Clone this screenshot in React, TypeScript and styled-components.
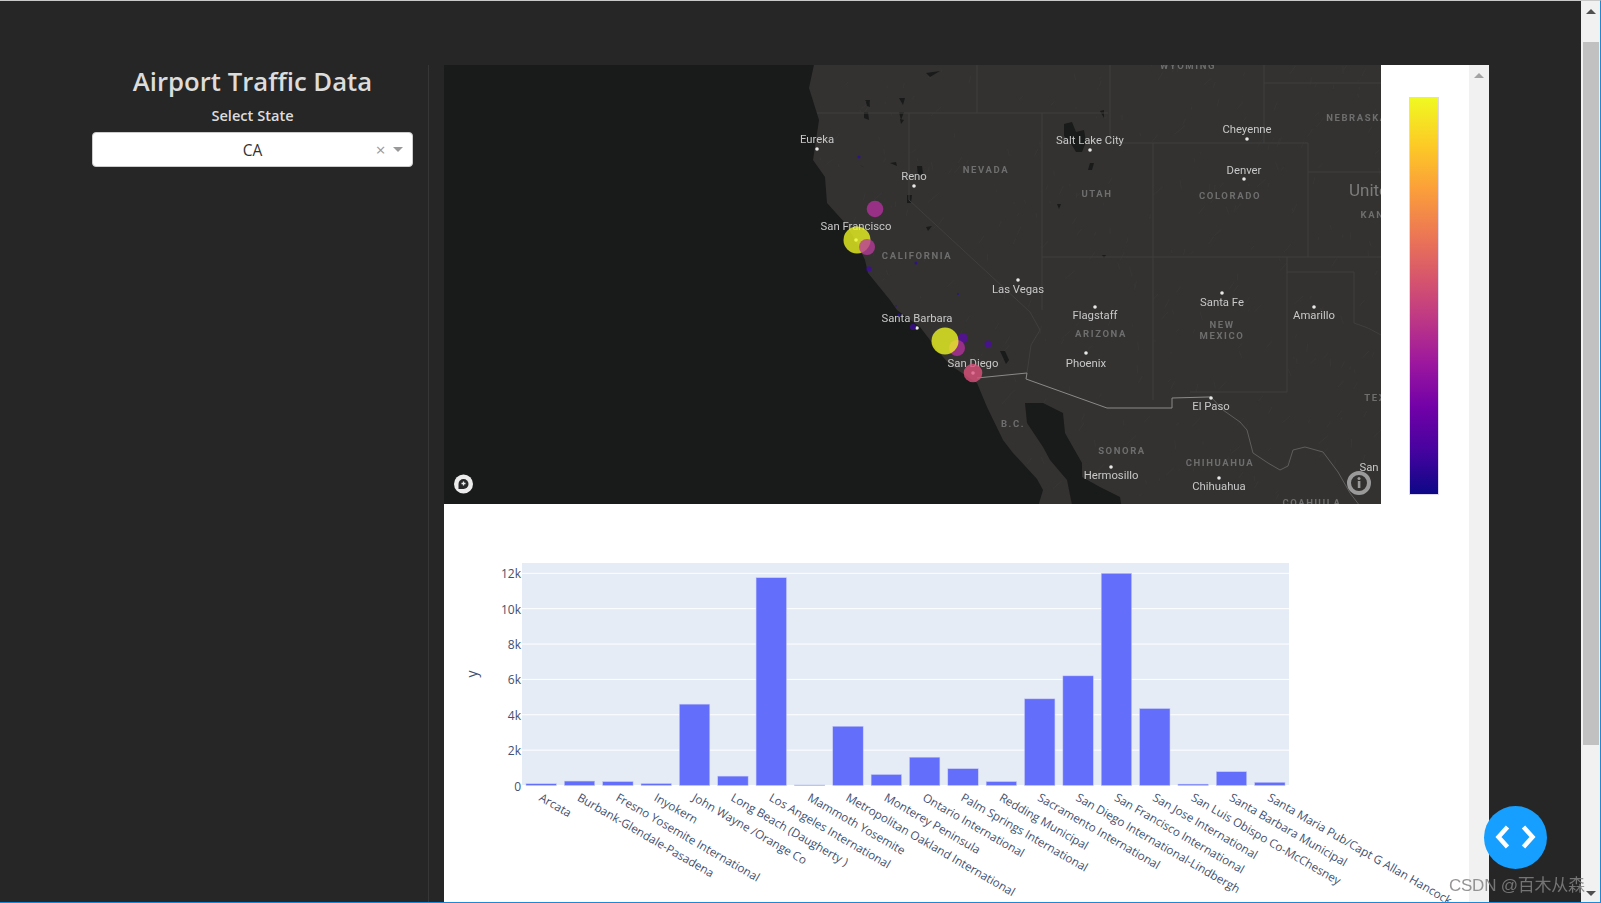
import React from 'react';
import styled, { createGlobalStyle } from 'styled-components';

const PAGE_FONT = '"Open Sans", "Noto Sans", sans-serif';
const MAP_FONT = 'Roboto, "Liberation Sans", sans-serif';

const GlobalStyle = createGlobalStyle`
  html, body {
    margin: 0;
    padding: 0;
    height: 903px;
    overflow: hidden;
    background: #262626;
    font-family: ${PAGE_FONT};
  }
`;

// map data, in page pixels; the svg viewBox starts at the map's corner
const MAP_X = 444;
const MAP_Y = 65;
const MAP_W = 937;
const MAP_H = 439;

const COAST =
  'M815 60 L809 88 L819 120 L813 160 L825 177 L827 203 L845 223 L857 243 L865 260 L868 273 L890 300 L897 310 L920 327 L930 340 L937 350 L950 365 L977 383 L987 407 L1003 440 L1013 453 L1037 479 L1043 490 L1037 510 L1400 510 L1400 60 Z';
const GULF =
  'M1025 403 L1043 403 L1063 413 L1065 433 L1082 463 L1082 477 L1100 487 L1120 497 L1122 510 L1073 510 L1067 480 L1050 460 L1043 447 L1027 423 Z';

const STATE_LINES = [
  'M817 113 L1108 113',
  'M977 60 L977 113',
  'M909 113 L909 200 L1030 312 L1040 330 L1031 345 L1027 373',
  'M1042 113 L1042 310',
  'M1042 257 L1400 257',
  'M1110 60 L1110 143 L1308 143 L1308 257',
  'M1153 143 L1153 400',
  'M1264 60 L1264 143',
  'M1264 83 L1400 83',
  'M1308 172 L1400 172',
  'M1287 257 L1287 392 L1190 392',
  'M1287 272 L1354 272 L1354 323 L1368 328 L1381 335',
];
const BORDER_LINE = 'M977 378 L1027 373 L1026 379 L1107 408 L1172 408 L1172 398 L1208 397 L1211 397';
const RIVER_LINE =
  'M1211 397 L1223 410 L1240 422 L1247 430 L1253 453 L1268 463 L1280 470 L1288 466 L1293 450 L1305 447 L1323 452 L1338 472 L1350 493 L1363 510';

const LAKES = [
  'M1064 124 L1072 122 L1076 132 L1084 130 L1086 142 L1082 152 L1076 152 L1070 142 L1064 136 Z',
  'M1090 163 L1094 163 L1092 170 L1088 170 Z',
  'M917 166 L922 166 L923 174 L918 176 Z',
  'M907 195 L912 195 L911 203 L907 203 Z',
  'M926 73 L940 71 L930 77 Z',
  'M866 102 L869 100 L870 107 L867 106 Z',
  'M899 98 L905 98 L903 105 Z',
  'M865 100 L870 100 L869 105 Z',
  'M864 112 L868 112 L869 120 L864 118 Z',
  'M899 112 L904 112 L901 120 Z',
  'M900 119 L904 120 L901 124 Z',
  'M1000 351 L1005 351 L1009 360 L1006 364 Z',
  'M1100 111 L1104 110 L1104 118 Z',
  'M1057 204 L1061 204 L1059 209 Z',
  'M890 163 L896 162 L897 166 Z',
  'M860 165 L865 168 L862 166 Z',
  'M926 227 L932 226 L928 231 Z',
  'M1102 255 L1106 255 L1104 258 Z',
];

const CITIES: [string, number, number, number, number][] = [
  ['Eureka', 817, 143, 817, 149],
  ['Reno', 914, 180, 914, 186],
  ['San Francisco', 856, 230, 856, 240],
  ['Salt Lake City', 1090, 144, 1090, 150],
  ['Las Vegas', 1018, 293, 1018, 280],
  ['Santa Barbara', 917, 322, 917, 328],
  ['Flagstaff', 1095, 319, 1095, 307],
  ['Phoenix', 1086, 367, 1086, 353],
  ['San Diego', 973, 367, 973, 373],
  ['Hermosillo', 1111, 479, 1111, 467],
  ['Cheyenne', 1247, 133, 1247, 139],
  ['Denver', 1244, 174, 1244, 179],
  ['Santa Fe', 1222, 306, 1222, 293],
  ['Amarillo', 1314, 319, 1314, 307],
  ['El Paso', 1211, 410, 1211, 398],
  ['Chihuahua', 1219, 490, 1219, 478],
  ['San Antonio', 1390, 471, 1390, 478],
];

const REGIONS: [string, number, number][] = [
  ['WYOMING', 1188, 69],
  ['NEVADA', 986, 173],
  ['UTAH', 1097, 197],
  ['CALIFORNIA', 917, 259],
  ['ARIZONA', 1101, 337],
  ['NEBRASKA', 1357, 121],
  ['COLORADO', 1230, 199],
  ['KANSAS', 1384, 218],
  ['NEW', 1222, 328],
  ['MEXICO', 1222, 339],
  ['TEXAS', 1383, 401],
  ['B.C.', 1013, 427],
  ['SONORA', 1122, 454],
  ['CHIHUAHUA', 1220, 466],
  ['COAHUILA', 1312, 506],
];

const BUBBLES: [number, number, number, string][] = [
  [859, 157, 1.5, '#2c0aa0'],
  [875, 209, 8.3, '#b5309e'],
  [857, 240, 13.5, '#f0f921'],
  [867, 247, 8, '#b93a9c'],
  [869, 269, 2.7, '#3f0a9c'],
  [916, 263, 1.5, '#2c0aa0'],
  [958, 294, 1, '#2c0aa0'],
  [896, 306, 0.8, '#2c0aa0'],
  [899, 315, 1.5, '#2c0aa0'],
  [913, 327, 3, '#3f0a9c'],
  [963, 338, 5, '#5a0ca8'],
  [988, 344, 3.5, '#4d0aa4'],
  [957, 348, 8, '#b5309e'],
  [945, 341, 13.5, '#f0f921'],
  [973, 373, 9.3, '#e0527f'],
];

// faint terrain flecks, from a small seeded generator so every render is the same
const TERRAIN = (() => {
  let seed = 7;
  const next = () => {
    seed = (seed * 16807) % 2147483647;
    return seed / 2147483647;
  };
  const flecks: string[] = [];
  for (let i = 0; i < 360; i++) {
    const x = 815 + next() * 570;
    const y = 65 + next() * 440;
    const len = 2 + next() * 7;
    const dx = len * (next() * 1.6 - 0.4);
    flecks.push(`M${x.toFixed(1)} ${y.toFixed(1)} l${dx.toFixed(1)} ${(-len).toFixed(1)}`);
  }
  return flecks.join(' ');
})();

const AIRPORTS: [string, number][] = [
  ['Arcata', 100],
  ['Burbank-Glendale-Pasadena', 250],
  ['Fresno Yosemite International', 220],
  ['Inyokern', 110],
  ['John Wayne /Orange Co', 4600],
  ['Long Beach (Daugherty )', 530],
  ['Los Angeles International', 11750],
  ['Mammoth Yosemite', 30],
  ['Metropolitan Oakland International', 3350],
  ['Monterey Peninsula', 620],
  ['Ontario International', 1600],
  ['Palm Springs International', 950],
  ['Redding Municipal', 220],
  ['Sacramento International', 4900],
  ['San Diego International-Lindbergh', 6200],
  ['San Francisco International', 12000],
  ['San Jose International', 4350],
  ['San Luis Obispo Co-McChesney', 80],
  ['Santa Barbara Municipal', 780],
  ['Santa Maria Pub/Capt G Allan Hancock', 180],
];

const PLOT_LEFT = 78;
const PLOT_TOP = 59;
const PLOT_W = 767;
const PLOT_H = 222;
const BASE_Y = 281.5;
const PX_PER_UNIT = 212.2 / 12000;
const BAND = PLOT_W / AIRPORTS.length;
const TICKS = [0, 2000, 4000, 6000, 8000, 10000, 12000];

const Frame = styled.div`
  box-sizing: border-box;
  width: 1601px;
  height: 903px;
  display: flex;
  overflow: hidden;
  background: #262626;
  border-top: 1px solid #c9c9c9;
  border-right: 1px solid #1a8ad8;
  border-bottom: 1px solid #1a8ad8;
`;

const Content = styled.div`
  flex: 1;
  display: flex;
  padding-top: 64px;
  min-width: 0;
`;

const Sidebar = styled.aside`
  box-sizing: border-box;
  width: 429px;
  padding: 0 15px 0 92px;
  border-right: 1px solid #363636;
  text-align: center;
`;

const Title = styled.h1`
  margin: 0;
  font-size: 25.7px;
  line-height: 34px;
  font-weight: 600;
  color: #dcdcdc;
`;

const FieldLabel = styled.div`
  margin-top: 6px;
  font-size: 14.6px;
  line-height: 20px;
  font-weight: 600;
  color: #dcdcdc;
`;

const Select = styled.div`
  box-sizing: border-box;
  height: 35px;
  margin-top: 7px;
  display: flex;
  align-items: center;
  background: #fff;
  border: 1px solid #ccc;
  border-radius: 4px;
`;

const SelectValue = styled.div`
  flex: 1;
  padding-left: 40px;
  font-size: 15.5px;
  color: #333;
`;

const ClearMark = styled.span`
  width: 17px;
  font-size: 17px;
  line-height: 17px;
  color: #999;
`;

const Caret = styled.span`
  margin: 0 9px 0 4px;
  border-style: solid;
  border-width: 5px 5px 0;
  border-color: #999 transparent transparent;
`;

const Panel = styled.main`
  width: 1045px;
  height: 838px;
  margin-left: 15px;
  display: flex;
  overflow: hidden;
  background: #fff;
`;

const PanelBody = styled.div`
  width: 1025px;
`;

const MapRow = styled.div`
  display: flex;
  height: ${MAP_H}px;
`;

const MapSvg = styled.svg`
  display: block;
  flex: none;
  filter: blur(0.35px);
`;

const CityLabel = styled.text`
  font-family: ${MAP_FONT};
  font-size: 11.3px;
  fill: #c8c8c8;
  text-anchor: middle;
`;

const RegionLabel = styled.text`
  font-family: ${MAP_FONT};
  font-size: 9.5px;
  font-weight: 700;
  letter-spacing: 1.6px;
  fill: #6e6e6e;
  text-anchor: middle;
`;

const CountryLabel = styled.text`
  font-family: ${MAP_FONT};
  font-size: 17px;
  fill: #7c7c7c;
`;

const ColorbarCell = styled.div`
  flex: 1;
  padding: 32px 0 0 28px;
`;

const Colorbar = styled.div`
  box-sizing: border-box;
  width: 30px;
  height: 398px;
  border: 1px solid #dcd8ee;
  background: linear-gradient(
    to top,
    #0d0887 0%,
    #46039f 11%,
    #7201a8 22%,
    #9c179e 33%,
    #bd3786 44%,
    #d8576b 55%,
    #ed7953 66%,
    #fb9f3a 77%,
    #fdca26 88%,
    #f0f921 100%
  );
`;

const ChartSvg = styled.svg`
  display: block;
  overflow: visible;
`;

const TickLabel = styled.text`
  font-family: ${PAGE_FONT};
  font-size: 12px;
  fill: #3f5170;
  text-anchor: end;
`;

const CategoryLabel = styled.text`
  font-family: ${PAGE_FONT};
  font-size: 11.7px;
  fill: #3f5170;
`;

const AxisTitle = styled.text`
  font-family: ${PAGE_FONT};
  font-size: 14px;
  fill: #3f5170;
  text-anchor: middle;
`;

const ScrollTrack = styled.div`
  position: relative;
  width: 20px;
  flex: none;
  background: #f1f1f1;
`;

const PanelArrow = styled.span`
  position: absolute;
  top: 8px;
  left: 5px;
  border-style: solid;
  border-width: 0 5px 5px;
  border-color: transparent transparent #a3a3a3;
`;

const WindowScroll = styled.div`
  position: relative;
  width: 19px;
  flex: none;
  background: #f1f1f1;
`;

const WindowThumb = styled.div`
  position: absolute;
  top: 41px;
  left: 2px;
  width: 16px;
  height: 703px;
  background: #c1c1c1;
`;

const WindowArrowUp = styled.span`
  position: absolute;
  top: 8px;
  left: 5px;
  border-style: solid;
  border-width: 0 5px 5px;
  border-color: transparent transparent #505050;
`;

const WindowArrowDown = styled.span`
  position: absolute;
  bottom: 6px;
  left: 5px;
  border-style: solid;
  border-width: 5px 5px 0;
  border-color: #505050 transparent transparent;
`;

const CodeButton = styled.div`
  position: fixed;
  left: 1483.5px;
  top: 805.5px;
  width: 63px;
  height: 63px;
  display: flex;
  align-items: center;
  justify-content: center;
  border-radius: 50%;
  background: #169fff;
`;

const Watermark = styled.div`
  position: fixed;
  left: 1449px;
  top: 874px;
  font-family: "Liberation Sans", "Noto Sans CJK SC", sans-serif;
  font-size: 17px;
  line-height: 24px;
  letter-spacing: -0.25px;
  white-space: nowrap;
  color: rgba(130, 130, 130, 0.85);
`;

const StreetMap: React.FC = () => (
  <MapSvg width={MAP_W} height={MAP_H} viewBox={`${MAP_X} ${MAP_Y} ${MAP_W} ${MAP_H}`}>
    <defs>
      <clipPath id="land">
        <path d={COAST} />
      </clipPath>
    </defs>
    <rect x={MAP_X} y={MAP_Y} width={MAP_W} height={MAP_H} fill="#191a1a" />
    <path d={COAST} fill="#333231" />
    <path d={TERRAIN} clipPath="url(#land)" stroke="#383736" strokeWidth={1} fill="none" />
    <path d={GULF} fill="#191a1a" />
    {LAKES.map((d) => (
      <path key={d} d={d} fill="#191a1a" />
    ))}
    {STATE_LINES.map((d) => (
      <path key={d} d={d} fill="none" stroke="#403f3d" strokeWidth={1} />
    ))}
    <path d={BORDER_LINE} fill="none" stroke="#8b8a88" strokeWidth={1} />
    <path d={RIVER_LINE} fill="none" stroke="#5f5e5c" strokeWidth={1} />
    {REGIONS.map(([name, x, y]) => (
      <RegionLabel key={name + y} x={x} y={y}>
        {name}
      </RegionLabel>
    ))}
    <CountryLabel x={1349} y={196}>
      United States
    </CountryLabel>
    {CITIES.map(([name, x, y, dotX, dotY]) => (
      <g key={name}>
        <circle cx={dotX} cy={dotY} r={1.8} fill="#e8e8e8" />
        <CityLabel x={x} y={y}>
          {name}
        </CityLabel>
      </g>
    ))}
    {BUBBLES.map(([x, y, r, color]) => (
      <circle key={`${x}-${y}`} cx={x} cy={y} r={r} fill={color} fillOpacity={0.78} />
    ))}
    <circle cx={463.5} cy={484} r={9.5} fill="#ececec" />
    <path d="M458.5 484 a5 5 0 1 1 5 5 h-5 Z" fill="#26282a" />
    <path d="M463.5 481.5 v4 M461.5 483.5 h4" stroke="#ececec" strokeWidth={1.3} />
    <circle cx={1359} cy={483} r={10} fill="#333231" stroke="#9a9a9a" strokeWidth={4} />
    <circle cx={1359} cy={478.5} r={1.5} fill="#9a9a9a" />
    <rect x={1357.8} y={481} width={2.6} height={7} fill="#9a9a9a" />
  </MapSvg>
);

const TrafficChart: React.FC = () => (
  <ChartSvg width={1025} height={398} viewBox="0 0 1025 398">
    <rect x={PLOT_LEFT} y={PLOT_TOP} width={PLOT_W} height={PLOT_H} fill="#e5ecf6" />
    {TICKS.map((tick) => {
      const y = BASE_Y - tick * PX_PER_UNIT;
      return (
        <g key={tick}>
          <line x1={PLOT_LEFT} x2={PLOT_LEFT + PLOT_W} y1={y} y2={y} stroke="#fff" strokeWidth={1} />
          <TickLabel x={PLOT_LEFT - 1} y={y + 5}>
            {tick === 0 ? '0' : `${tick / 1000}k`}
          </TickLabel>
        </g>
      );
    })}
    {AIRPORTS.map(([name, value], i) => {
      const height = value * PX_PER_UNIT;
      const center = PLOT_LEFT + BAND * (i + 0.5);
      return (
        <g key={name}>
          <rect
            x={center - 15.2}
            y={BASE_Y - height}
            width={30.4}
            height={height}
            fill="#636efa"
            stroke="#c6cbf5"
            strokeWidth={0.5}
          />
          <CategoryLabel transform={`translate(${center - 3} 296) rotate(30)`}>{name}</CategoryLabel>
        </g>
      );
    })}
    <AxisTitle transform="translate(33 170) rotate(-90)">y</AxisTitle>
  </ChartSvg>
);

const App: React.FC = () => (
  <>
    <GlobalStyle />
    <Frame>
      <Content>
        <Sidebar>
          <Title>Airport Traffic Data</Title>
          <FieldLabel>Select State</FieldLabel>
          <Select>
            <SelectValue>CA</SelectValue>
            <ClearMark>×</ClearMark>
            <Caret />
          </Select>
        </Sidebar>
        <Panel>
          <PanelBody>
            <MapRow>
              <StreetMap />
              <ColorbarCell>
                <Colorbar />
              </ColorbarCell>
            </MapRow>
            <TrafficChart />
          </PanelBody>
          <ScrollTrack>
            <PanelArrow />
          </ScrollTrack>
        </Panel>
      </Content>
      <WindowScroll>
        <WindowArrowUp />
        <WindowThumb />
        <WindowArrowDown />
      </WindowScroll>
    </Frame>
    <CodeButton>
      <svg width="41" height="24" viewBox="0 0 41 24" fill="none" stroke="#fff" strokeWidth="4.5">
        <path d="M12.5 2 L3.5 12 L12.5 22" />
        <path d="M28.5 2 L37.5 12 L28.5 22" />
      </svg>
    </CodeButton>
    <Watermark>CSDN @百木从森</Watermark>
  </>
);

export default App;
